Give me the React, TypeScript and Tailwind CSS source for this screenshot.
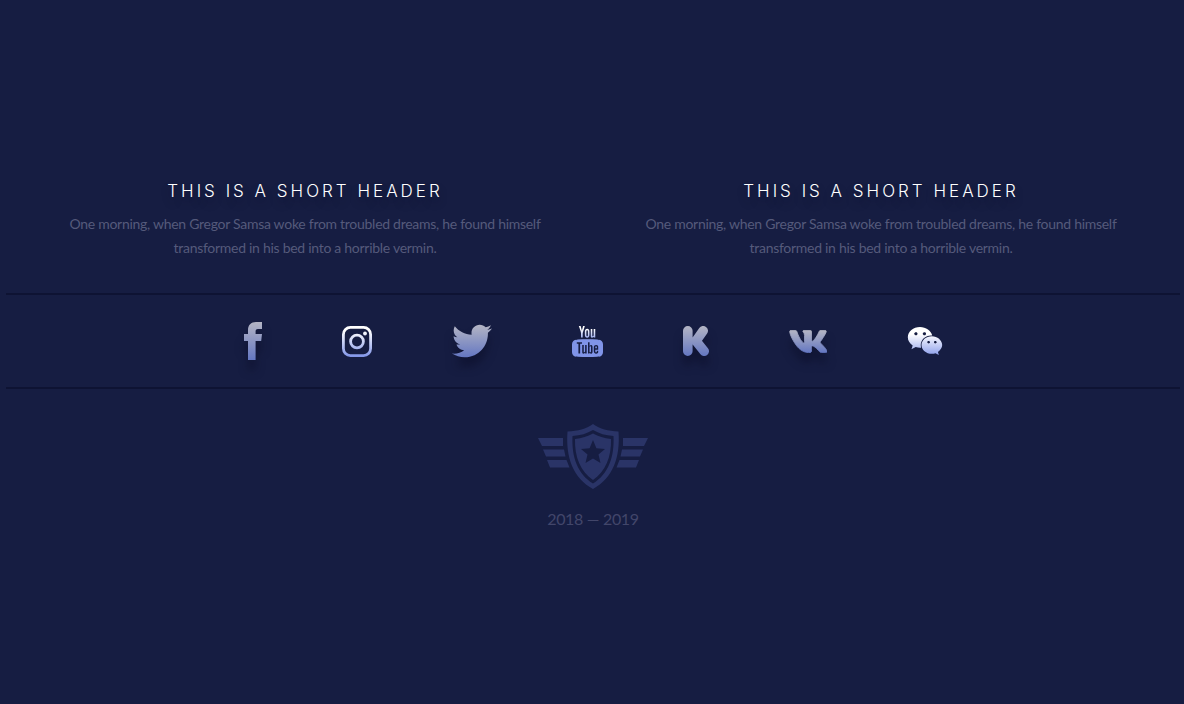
import type { ReactNode } from "react";
import { FaTwitter, FaWeixin } from "react-icons/fa";
import { TfiYoutube } from "react-icons/tfi";

const columns = [
  {
    id: "left",
    title: "THIS IS A SHORT HEADER",
    text: "One morning, when Gregor Samsa woke from troubled dreams, he found himself transformed in his bed into a horrible vermin.",
  },
  {
    id: "right",
    title: "THIS IS A SHORT HEADER",
    text: "One morning, when Gregor Samsa woke from troubled dreams, he found himself transformed in his bed into a horrible vermin.",
  },
];

function Gradients() {
  return (
    <svg width="0" height="0" className="absolute" aria-hidden="true">
      <defs>
        <linearGradient id="bright" x1="0" y1="0" x2="0" y2="1">
          <stop offset="0.25" stopColor="#ffffff" />
          <stop offset="1" stopColor="#8fa1ec" />
        </linearGradient>
        <linearGradient id="tube" x1="0" y1="0" x2="0" y2="1">
          <stop offset="0.1" stopColor="#ffffff" />
          <stop offset="0.42" stopColor="#93a5ee" />
          <stop offset="0.46" stopColor="#8094e8" />
        </linearGradient>
        <linearGradient id="muted" x1="0" y1="0" x2="0" y2="1">
          <stop offset="0" stopColor="#b4b5c4" />
          <stop offset="1" stopColor="#6477c2" />
        </linearGradient>
      </defs>
    </svg>
  );
}

function SocialLink({ label, raised, children }: { label: string; raised?: boolean; children: ReactNode }) {
  return (
    <a
      href="#"
      aria-label={label}
      className={raised ? "block drop-shadow-[0_10px_4px_rgba(9,12,38,0.5)]" : "block"}
    >
      {children}
    </a>
  );
}

function Facebook() {
  return (
    <svg width="18" height="38" viewBox="0 0 18 38" fill="url(#muted)">
      <path d="M4 38V19H0v-7h4V8c0-5 3-8 8-8h6v7h-4c-2 0-2.400 1-2.400 2.500V12H18l-.8 7h-5.600v19z" />
    </svg>
  );
}

function Instagram() {
  return (
    <svg width="30" height="31" viewBox="0 0 30 31">
      <defs>
        <linearGradient id="lens" gradientUnits="userSpaceOnUse" x1="0" y1="0" x2="0" y2="31">
          <stop offset="0.15" stopColor="#ffffff" />
          <stop offset="1" stopColor="#8094e8" />
        </linearGradient>
      </defs>
      <rect x="1.400" y="1.400" width="27.200" height="28.200" rx="7" fill="none" stroke="url(#lens)" strokeWidth="2.800" />
      <circle cx="15" cy="15.500" r="6.400" fill="none" stroke="url(#lens)" strokeWidth="2.800" />
      <circle cx="23" cy="7.500" r="1.900" fill="url(#lens)" />
    </svg>
  );
}

function Youtube() {
  return (
    <svg width="31" height="31" viewBox="0 0 31 31">
      <TfiYoutube size={31} fill="url(#tube)" />
      <path
        fill="#8094e8"
        d="M4.500 13.800A4.500 4.500 0 0 0 0 18.300v8A4.500 4.500 0 0 0 4.500 30.800zM26.500 13.800a4.500 4.500 0 0 1 4.500 4.500v8a4.500 4.500 0 0 1-4.500 4.500z"
      />
    </svg>
  );
}

function Kickstarter() {
  return (
    <svg width="26" height="30" viewBox="0 0 26 30" fill="none" stroke="url(#kick)" strokeWidth="9.600" strokeLinecap="round" strokeLinejoin="round">
      <defs>
        <linearGradient id="kick" gradientUnits="userSpaceOnUse" x1="0" y1="0" x2="0" y2="30">
          <stop offset="0" stopColor="#b4b5c4" />
          <stop offset="1" stopColor="#6477c2" />
        </linearGradient>
      </defs>
      <path d="M4.800 4.800v20.400M20.200 4.800L13 15l8.200 10.200" />
      <path d="M6 15h7" strokeWidth="6" />
    </svg>
  );
}

function Vk() {
  return (
    <svg width="38" height="23" viewBox="12 90 542 332" fill="url(#muted)" stroke="url(#muted)" strokeWidth="12">
      <path d="M545 117.7c3.7-12.5 0-21.7-17.8-21.7h-58.9c-15 0-21.900 7.900-25.600 16.700 0 0-30 73.100-72.400 120.500-13.700 13.700-20 18.100-27.500 18.100-3.700 0-9.400-4.400-9.400-16.900V117.700c0-15-4.200-21.700-16.600-21.700h-92.600c-9.400 0-15 7-15 13.500 0 14.200 21.200 17.500 23.400 57.500v86.800c0 19-3.400 22.500-10.900 22.500-20 0-68.600-73.400-97.400-157.400-5.800-16.300-11.500-22.900-26.600-22.900H38.800c-16.800 0-20.200 7.900-20.200 16.700 0 15.600 20 93.100 93.100 195.500C160.400 378.100 229 416 291.400 416c37.500 0 42.100-8.400 42.100-22.900 0-66.800-3.400-73.100 15.400-73.100 8.700 0 23.700 4.400 58.700 38.100 40 40 46.600 57.900 69 57.900h58.900c16.800 0 25.300-8.400 20.400-25-11.200-34.900-86.900-106.700-90.300-111.500-8.700-11.200-6.200-16.200 0-26.200.1-.1 72-101.300 79.400-135.600z" />
    </svg>
  );
}

function Badge() {
  return (
    <svg width="110" height="65" viewBox="0 0 110 65" fill="#2a3467" aria-hidden="true">
      <path d="M0 14h25v8H4zM5 25.500h21l1.500 7H8zM9 36h19.500l3 7.500H12z" />
      <path d="M110 14H85v8h21zM105 25.500H84l-1.500 7H102zM101 36H81.500l-3 7.500H98z" />
      <path
        fillRule="evenodd"
        d="M55 0c7 5 15 7 25.500 7.500C82.500 33 75 54 55 65 35 54 27.500 33 29.500 7.500 40 7 48 5 55 0zM55 6c-6 3.500-12.500 5.500-20.500 6C33.500 33 39.500 50 55 59.500 70.500 50 76.500 33 75.500 12 67.500 11.500 61 9.500 55 6z"
      />
      <path
        fillRule="evenodd"
        d="M55 9.500c5.500 3 11 4.700 18 5.500C73.500 33 67.500 47.500 55 56 42.500 47.500 36.500 33 37 15 44 14.200 49.500 12.500 55 9.500zM55 16l-3.400 8.200-8.600.7 6.500 5.700-2 8.500L55 34.600l7.500 4.500-2-8.500 6.500-5.700-8.600-.7z"
      />
    </svg>
  );
}

export default function App() {
  return (
    <main className="min-h-screen bg-[#161d42] pt-[179px] pr-1 pl-1.5 font-['Lato',sans-serif]">
      <Gradients />
      <section className="mx-auto grid max-w-6xl grid-cols-2">
        {columns.map((column) => (
          <article key={column.id} className="px-12 pb-[33px] text-center">
            <h2 className="font-['Inter',sans-serif] text-[17px] leading-6 font-light tracking-[3px] text-white [text-shadow:0_6px_8px_rgba(9,12,38,0.4)]">
              {column.title}
            </h2>
            <p className="mt-[9px] text-sm leading-6 tracking-[-0.02em] text-[#555a7b]">{column.text}</p>
          </article>
        ))}
      </section>
      <nav
        aria-label="Social networks"
        className="flex h-24 items-center justify-center gap-20 border-y-2 border-[#0e1333]"
      >
        <SocialLink label="Facebook" raised>
          <Facebook />
        </SocialLink>
        <SocialLink label="Instagram">
          <Instagram />
        </SocialLink>
        <SocialLink label="Twitter" raised>
          <FaTwitter size={40} fill="url(#muted)" />
        </SocialLink>
        <SocialLink label="YouTube">
          <Youtube />
        </SocialLink>
        <SocialLink label="Kickstarter" raised>
          <Kickstarter />
        </SocialLink>
        <SocialLink label="VK" raised>
          <Vk />
        </SocialLink>
        <SocialLink label="WeChat">
          <FaWeixin size={36} fill="url(#bright)" />
        </SocialLink>
      </nav>
      <footer className="flex flex-col items-center pt-[35px]">
        <Badge />
        <p className="mt-[18px] text-base leading-6 tracking-[-0.02em] text-[#42466a]">2018 — 2019</p>
      </footer>
    </main>
  );
}
